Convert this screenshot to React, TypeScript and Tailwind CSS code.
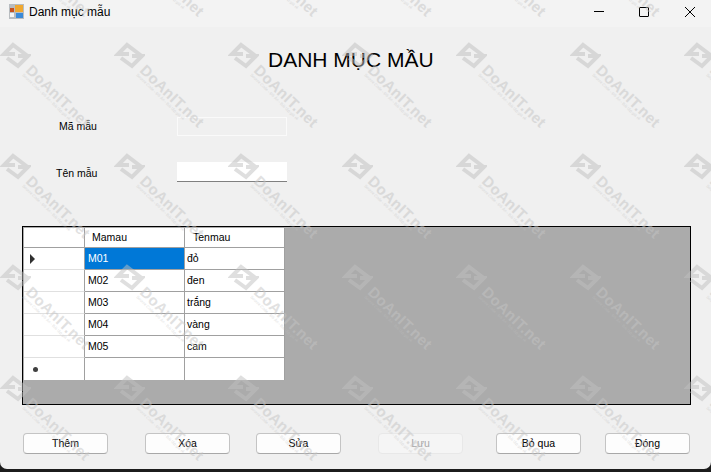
import React from "react";

const tiles = Array.from({ length: 42 });

const rows = [
  { ma: "M01", ten: "đỏ" },
  { ma: "M02", ten: "đen" },
  { ma: "M03", ten: "trắng" },
  { ma: "M04", ten: "vàng" },
  { ma: "M05", ten: "cam" },
];

function Mark() {
  return (
    <div className="relative w-[114px] h-[111px] shrink-0 overflow-visible">
      <svg width="31" height="28" viewBox="0 0 31 28" className="absolute left-0 top-0" fill="none" stroke="#c0c0c0" strokeWidth="4">
        <path d="M15 12 H4 L13 3 L29 15" />
        <path d="M18 14 H28 L18 24 L7 16" />
      </svg>
      <div className="absolute left-[34px] top-[20px] origin-top-left rotate-[44deg] whitespace-nowrap text-[15px] leading-none font-semibold text-[#c4c4c4] tracking-[0.4px]">
        DoAnIT.net
      </div>
      <div className="absolute left-[24px] top-[31px] origin-top-left rotate-[44deg] whitespace-nowrap text-[4px] leading-none text-[#c0c0c0]">
        Source Code - Đồ Án - Bài tập giá rẻ
      </div>
    </div>
  );
}

function Btn({ label, disabled }: { label: string; disabled?: boolean }) {
  return (
    <div
      className={
        disabled
          ? "w-[85px] h-[21px] rounded-[4px] border border-[#e8e8e8] bg-[#f5f5f5] text-[#a8a8a8] flex items-center justify-center"
          : "w-[85px] h-[21px] rounded-[4px] border border-[#c4c4c4] border-b-[#a8a8a8] bg-[#fdfdfd] flex items-center justify-center"
      }
    >
      {label}
    </div>
  );
}

export default function App() {
  return (
    <div className="w-[711px] h-[472px] bg-[#1c1c1c] overflow-hidden text-[10.5px] text-black font-['Liberation_Sans',sans-serif]">
      <div className="relative w-[711px] h-[469px] rounded-b-[7px] bg-[#f0f0f0] overflow-hidden flex flex-col">
        <div className="h-[27px] pb-[4px] bg-[#f3f3f3] flex items-center">
          <svg width="15" height="15" viewBox="0 0 15 15" className="ml-[9px]">
            <rect x="0" y="0" width="15" height="15" fill="#b8bcc0" />
            <rect x="6" y="1" width="8" height="7" fill="#f0a830" />
            <rect x="1" y="4" width="4" height="4" fill="#c8501c" />
            <rect x="1" y="9" width="4" height="4" fill="#f4f4f4" />
            <rect x="7" y="9" width="7" height="5" fill="#3a8ad8" />
          </svg>
          <span className="ml-[5px] text-[12px]">Danh mục mẫu</span>
          <div className="ml-auto flex items-center">
            <div className="w-[10px] h-px bg-black mr-[35px]" />
            <div className="w-[10px] h-[10px] rounded-[1px] border border-black mr-[36px]" />
            <svg width="10" height="10" viewBox="0 0 10 10" className="mr-[16px]" stroke="#000" strokeWidth="1">
              <path d="M0 0 L10 10 M10 0 L0 10" />
            </svg>
          </div>
        </div>

        <div className="flex-1 flex flex-col">
          <h1 className="mt-[20px] pl-[268px] text-[21px] leading-[25px] whitespace-nowrap">DANH MỤC MẦU</h1>

          <div className="mt-[45px] flex items-center h-[19px]">
            <div className="w-[177px] pl-[59px]">Mã mẫu</div>
            <div className="w-[110px] h-[19px] border border-[#fafafa]" />
          </div>
          <div className="mt-[26px] flex items-center h-[20px]">
            <div className="w-[177px] pl-[56px] pt-[3px]">Tên mẫu</div>
            <div className="w-[110px] h-[20px] bg-white border-b border-[#808080]" />
          </div>

          <div className="mt-[44px] mx-[22px] w-[669px] h-[179px] border border-black bg-[#ababab] p-px">
            <div className="grid grid-cols-[61px_100px_100px] w-[261px] grid-rows-[20px_repeat(6,22px)]">
              <div className="bg-white border-r border-b border-[#a0a0a0]" />
              <div className="bg-white border-r border-b border-[#a0a0a0] pl-[7px] pt-px flex items-center">Mamau</div>
              <div className="bg-white border-r border-b border-[#a0a0a0] pl-[8px] pt-px flex items-center">Tenmau</div>
              {rows.map((r, i) => (
                <React.Fragment key={r.ma}>
                  <div className="bg-white border-r border-b border-r-[#a0a0a0] border-b-[#e0e0e0] flex items-center pl-[6px]">
                    {i === 0 && <div className="w-0 h-0 border-y-[5px] border-y-transparent border-l-[5px] border-l-[#303030]" />}
                  </div>
                  <div className={i === 0 ? "bg-[#0078d7] text-white border-r border-b border-[#a0a0a0] pl-[3px] pt-px flex items-center" : "bg-white border-r border-b border-[#a0a0a0] pl-[3px] pt-px flex items-center"}>
                    {r.ma}
                  </div>
                  <div className="bg-white border-r border-b border-[#a0a0a0] pl-[2px] pt-px flex items-center">{r.ten}</div>
                </React.Fragment>
              ))}
              <div className="bg-white border-r border-r-[#a0a0a0] flex items-center pl-[9px]">
                <div className="w-[5px] h-[5px] rounded-full bg-[#404040]" />
              </div>
              <div className="bg-white border-r border-[#a0a0a0]" />
              <div className="bg-white border-r border-[#a0a0a0]" />
            </div>
          </div>

          <div className="mt-[28px] pl-[23px] flex">
            <Btn label="Thêm" />
            <div className="ml-[37px]"><Btn label="Xóa" /></div>
            <div className="ml-[26px]"><Btn label="Sửa" /></div>
            <div className="ml-[37px]"><Btn label="Lưu" disabled /></div>
            <div className="ml-[33px]"><Btn label="Bỏ qua" /></div>
            <div className="ml-[24px]"><Btn label="Đóng" /></div>
          </div>
        </div>

        {/* watermark sits over the whole window */}
        <div className="absolute left-0 top-[-69px] w-[798px] flex flex-wrap opacity-50 pointer-events-none">
          {tiles.map((_, i) => (
            <Mark key={i} />
          ))}
        </div>
      </div>
    </div>
  );
}
